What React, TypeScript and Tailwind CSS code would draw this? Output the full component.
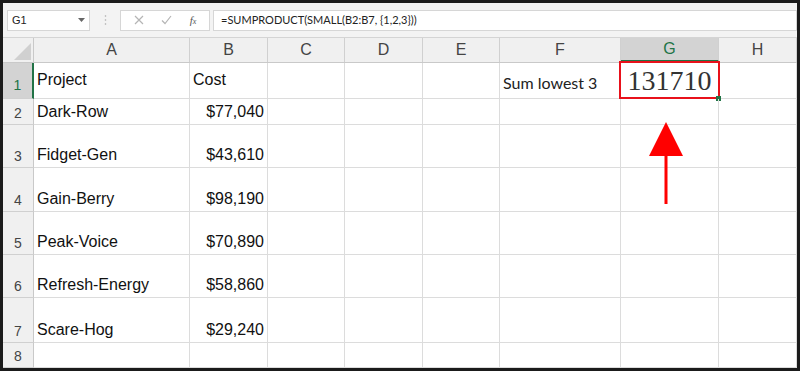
import React from "react";

const cols = ["A", "B", "C", "D", "E", "F", "G", "H"];
const colW = ["w-[156px]", "w-[78px]", "w-[77px]", "w-[78px]", "w-[77px]", "w-[121px]", "w-[98px]", "flex-1"];
const rowH = ["h-[36px]", "h-[26px]", "h-[43px]", "h-[44px]", "h-[43px]", "h-[43px]", "h-[45px]", "h-[25px]"];

const data: Record<number, { a?: string; b?: string }> = {
  1: { a: "Project", b: "Cost" },
  2: { a: "Dark-Row", b: "$77,040" },
  3: { a: "Fidget-Gen", b: "$43,610" },
  4: { a: "Gain-Berry", b: "$98,190" },
  5: { a: "Peak-Voice", b: "$70,890" },
  6: { a: "Refresh-Energy", b: "$58,860" },
  7: { a: "Scare-Hog", b: "$29,240" },
  8: {},
};

const Cell = ({ w, children, className = "" }: { w: string; children?: React.ReactNode; className?: string }) => (
  <div className={`${w} shrink-0 border-r border-b border-[#dcdcdc] flex ${className}`}>{children}</div>
);

export default function App() {
  return (
    <div className="w-[800px] h-[371px] border-[3px] border-[#1b1b1b] bg-white overflow-hidden flex flex-col" style={{ fontFamily: '"Liberation Sans", Arial, sans-serif' }}>
      {/* formula bar */}
      <div className="h-[35px] shrink-0 bg-[#f3f3f3] flex items-center pl-[4px] gap-[3px] border-b border-[#d4d4d4]">
        <div className="w-[83px] h-[21px] bg-white border border-[#d6d6d6] flex items-center justify-between px-[4px] text-[11px] text-[#222]">
          <span>G1</span>
          <svg width="7" height="4" viewBox="0 0 7 4"><path d="M0 0h7L3.5 4z" fill="#666" /></svg>
        </div>
        <div className="w-[24px] flex justify-center">
          <svg width="3" height="10" viewBox="0 0 3 10"><circle cx="1.5" cy="1" r="0.8" fill="#aaa" /><circle cx="1.5" cy="5" r="0.8" fill="#aaa" /><circle cx="1.5" cy="9" r="0.8" fill="#aaa" /></svg>
        </div>
        <div className="w-[90px] h-[21px] bg-white border border-[#d6d6d6] flex items-center justify-around px-[4px]">
          <svg width="10" height="10" viewBox="0 0 10 10"><path d="M1 1l8 8M9 1l-8 8" stroke="#b5b5b5" strokeWidth="1.2" /></svg>
          <svg width="11" height="10" viewBox="0 0 11 10"><path d="M1 5.5l3 3L10 1" stroke="#b5b5b5" strokeWidth="1.2" fill="none" /></svg>
          <span className="text-[11px] italic text-[#555]" style={{ fontFamily: '"Liberation Serif", serif' }}>f<span className="text-[8px]">x</span></span>
        </div>
        <div className="flex-1 h-[21px] bg-white border border-[#d6d6d6] flex items-center pl-[7px] text-[11px] text-[#222]" style={{ fontFamily: "Lato, sans-serif" }}>
          =SUMPRODUCT(SMALL(B2:B7, {"{"}1,2,3{"}"}))
        </div>
      </div>

      {/* column header */}
      <div className="h-[25px] shrink-0 flex bg-[#f0f0f0] border-b border-[#c9c9c9]">
        <div className="w-[31px] shrink-0 border-r border-[#c9c9c9] flex items-end justify-end pr-[2px] pb-[2px]">
          <svg width="17" height="17" viewBox="0 0 17 17"><path d="M17 0V17H0z" fill="#d0d0d0" /></svg>
        </div>
        {cols.map((c, i) => (
          <div
            key={c}
            className={`${colW[i]} shrink-0 border-r border-[#d0d0d0] flex items-center justify-center text-[16px] ${c === "G" ? "bg-[#d3d3d3] text-[#217346] border-b-2 border-b-[#217346]" : "text-[#444]"}`}
          >
            {c}
          </div>
        ))}
      </div>

      {/* rows */}
      <div className="relative flex-1">
        {[1, 2, 3, 4, 5, 6, 7, 8].map((r, ri) => {
          const align = r === 1 ? "items-center pb-[2px]" : "items-end pb-0";
          return (
            <div key={r} className={`${rowH[ri]} flex`}>
              <div
                className={`w-[31px] shrink-0 border-b border-[#d0d0d0] flex items-end justify-center pb-0 text-[14px] ${r === 1 ? "bg-[#d3d3d3] text-[#217346] border-r-2 border-r-[#217346] pb-[2px]" : "bg-[#f0f0f0] text-[#444] border-r border-r-[#c9c9c9]"}`}
              >
                {r}
              </div>
              <Cell w={colW[0]} className={`${align} pl-[3px] text-[16px] text-[#111]`}>{data[r].a}</Cell>
              <Cell w={colW[1]} className={`${align} text-[16px] text-[#111] ${r === 1 ? "pl-[3px]" : "justify-end pr-[3px]"}`}>{data[r].b}</Cell>
              <Cell w={colW[2]} />
              <Cell w={colW[3]} />
              <Cell w={colW[4]} />
              <Cell w={colW[5]} className="items-end pl-[3px] text-[16px] text-[#222]">
                {r === 1 && <span className="pb-[3px]" style={{ fontFamily: "Lato, sans-serif" }}>Sum lowest 3</span>}
              </Cell>
              <Cell w={colW[6]} className="relative">
                {r === 1 && (
                  <>
                    <div className="absolute -left-[2px] -top-[2px] right-[-2px] bottom-[-1px] border-2 border-[#e8111b] flex items-center justify-center">
                      <span className="text-[28px] leading-none text-[#333] pt-[2px]" style={{ fontFamily: '"Liberation Serif", serif' }}>131710</span>
                    </div>
                    <div className="absolute -right-[3px] -bottom-[3px] w-[5px] h-[5px] bg-[#217346]" />
                  </>
                )}
              </Cell>
              <Cell w={colW[7]} />
            </div>
          );
        })}
        <svg className="absolute left-[643px] top-[59px]" width="40" height="85" viewBox="0 0 40 85">
          <path d="M20 0L37 34H3z" fill="#ff0000" />
          <rect x="18.5" y="33" width="3" height="49" fill="#ff0000" />
        </svg>
      </div>
    </div>
  );
}
